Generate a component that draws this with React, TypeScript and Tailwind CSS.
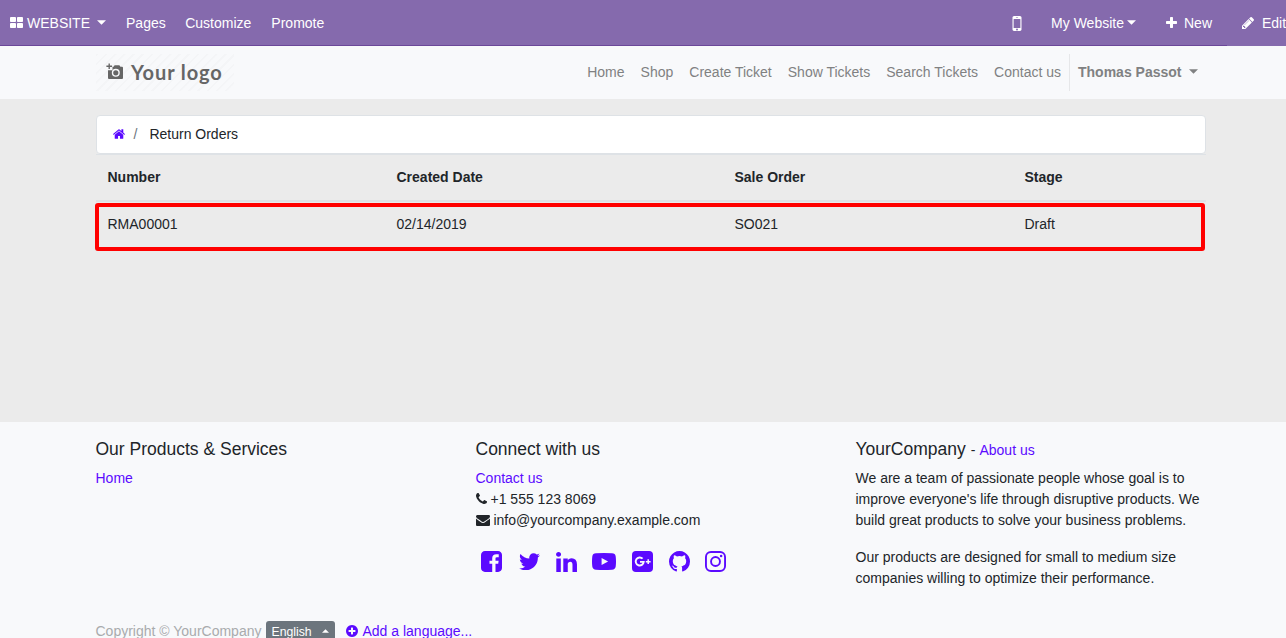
import React from "react";

const P = {
  thLarge:
    "M832 1024v384q0 52-38 90t-90 38h-512q-52 0-90-38t-38-90v-384q0-52 38-90t90-38h512q52 0 90 38t38 90zm0-768v384q0 52-38 90t-90 38h-512q-52 0-90-38t-38-90v-384q0-52 38-90t90-38h512q52 0 90 38t38 90zm896 768v384q0 52-38 90t-90 38h-512q-52 0-90-38t-38-90v-384q0-52 38-90t90-38h512q52 0 90 38t38 90zm0-768v384q0 52-38 90t-90 38h-512q-52 0-90-38t-38-90v-384q0-52 38-90t90-38h512q52 0 90 38t38 90z",
  home: "M1472 992v480q0 26-19 45t-45 19h-384v-384h-256v384h-384q-26 0-45-19t-19-45v-480q0-1 .5-3t.5-3l575-474 575 474q1 2 1 6zm223-69l-62 74q-8 9-21 11h-3q-13 0-21-7l-692-577-692 577q-12 8-24 7-13-2-21-11l-62-74q-8-10-7-23.5t11-21.5l719-599q32-26 76-26t76 26l244 204v-195q0-14 9-23t23-9h192q14 0 23 9t9 23v408l219 182q10 8 11 21.5t-7 23.5z",
  phone:
    "M1600 1240q0 27-10 70.5t-21 68.5q-21 50-122 106-94 51-186 51-27 0-53-3.5t-57.5-12.5-47-14.5-55.5-20.5-49-18q-98-35-175-83-127-79-264-216t-216-264q-48-77-83-175-3-9-18-49t-20.5-55.5-14.5-47-12.5-57.5-3.5-53q0-92 51-186 56-101 106-122 25-11 68.5-21t70.5-10q14 0 21 3 18 6 53 76 11 19 30 54t35 63.5 31 53.5q3 4 17.5 25t21.5 35.5 7 28.5q0 20-28.5 50t-62 55-62 53-28.5 46q0 9 5 22.5t8.5 20.5 14 24 11.5 19q76 137 174 235t235 174q2 1 19 11.5t24 14 20.5 8.5 22.5 5q18 0 46-28.5t53-62 55-62 50-28.5q14 0 28.5 7t35.5 21.5 25 17.5q25 15 53.5 31t63.5 35 54 30q70 35 76 53 3 7 3 21z",
  envelope:
    "M1792 710v794q0 66-47 113t-113 47h-1472q-66 0-113-47t-47-113v-794q44 49 101 87 362 246 497 345 57 42 92.5 65.5t94.5 48 110 24.5h2q51 0 110-24.5t94.5-48 92.5-65.5q170-123 498-345 57-39 100-87zm0-294q0 79-49 151t-122 123q-376 261-468 325-10 7-42.5 31t-54 38.5-52 32.5-57.5 27-50 9h-2q-23 0-50-9t-57.5-27-52-32.5-54-38.5-42.5-31q-91-64-262-182.5t-205-142.5q-62-42-117-115.5t-55-136.5q0-78 41.5-130t118.5-52h1472q65 0 112.5 47t47.5 113z",
  facebook:
    "M1376 128q119 0 203.5 84.5t84.5 203.5v960q0 119-84.5 203.5t-203.5 84.5h-188v-595h199l30-232h-229v-148q0-56 23.5-84t91.5-28l122-1v-207q-63-9-178-9-136 0-217.5 80t-81.5 226v171h-200v232h200v595h-532q-119 0-203.5-84.5t-84.5-203.5v-960q0-119 84.5-203.5t203.5-84.5h960z",
  twitter:
    "M1684 408q-67 98-162 167 1 14 1 42 0 130-38 259.5t-115.5 248.5-184.5 210.5-258 146-323 54.5q-271 0-496-145 35 4 78 4 225 0 401-138-105-2-188-64.5t-114-159.5q33 5 61 5 43 0 85-11-112-23-185.5-111.5t-73.5-205.5v-4q68 38 146 41-66-44-105-115t-39-154q0-88 44-163 121 149 294.5 238.5t371.5 99.5q-8-38-8-74 0-134 94.5-228.5t228.5-94.5q140 0 236 102 109-21 205-78-37 115-142 178 93-10 186-50z",
  linkedin:
    "M477 625v991h-330v-991h330zm21-306q1 73-50.5 122t-135.5 49h-2q-82 0-132-49t-50-122q0-74 51.5-122.5t134.5-48.5 133 48.5 51 122.5zm1166 729v568h-329v-530q0-105-40.5-164.5t-126.5-59.5q-63 0-105.5 34.5t-63.5 85.5q-11 30-11 81v553h-329q2-399 2-647t-1-296l-1-48h329v144h-2q20-32 41-56t56.5-52 87-43.5 114.5-15.5q171 0 275 113.5t104 332.5z",
  github:
    "M896 128q209 0 385.5 103t279.5 279.5 103 385.5q0 251-146.5 451.5t-378.5 277.5q-27 5-40-7t-13-30q0-3 .5-76.5t.5-134.5q0-97-52-142 57-6 102.5-18t94-39 81-66.5 53-105 20.5-150.5q0-119-79-206 37-91-8-204-28-9-81 11t-92 44l-38 24q-93-26-192-26t-192 26q-16-11-42.5-27t-83.5-38.5-85-13.5q-45 113-8 204-79 87-79 206 0 85 20.5 150t52.5 105 80.5 67 94 39 102.5 18q-39 36-49 103-21 10-45 15t-57 5-65.5-21.5-55.5-62.5q-19-32-48.5-52t-49.5-24l-20-3q-21 0-29 4.5t-5 11.5 9 14 13 12l7 5q22 10 43.5 38t31.5 51l10 23q13 38 44 61.5t67 30 69.5 7 55.5-3.5l23-4q0 38 .5 88.5t.5 54.5q0 18-13 30t-40 7q-232-77-378.5-277.5t-146.5-451.5q0-209 103-385.5t279.5-279.5 385.5-103z",
  pencil:
    "M491 1536l91-91-235-235-91 91v107h128v128h107zm523-928q0-22-22-22-10 0-17 7l-542 542q-7 7-7 17 0 22 22 22 10 0 17-7l542-542q7-7 7-17zm-54-192l416 416-832 832h-416v-416zm683 96q0 53-37 90l-166 166-416-416 166-165q36-38 90-38 53 0 91 38l235 234q37 39 37 91z",
  plus: "M1600 736v192q0 40-28 68t-68 28h-416v416q0 40-28 68t-68 28h-192q-40 0-68-28t-28-68v-416h-416q-40 0-68-28t-28-68v-192q0-40 28-68t68-28h416v-416q0-40 28-68t68-28h192q40 0 68 28t28 68v416h416q40 0 68 28t28 68z",
  plusCircle:
    "M1344 960v-128q0-26-19-45t-45-19h-256v-256q0-26-19-45t-45-19h-128q-26 0-45 19t-19 45v256h-256q-26 0-45 19t-19 45v128q0 26 19 45t45 19h256v256q0 26 19 45t45 19h128q26 0 45-19t19-45v-256h256q26 0 45-19t19-45zm320-64q0 209-103 385.5t-279.5 279.5-385.5 103-385.5-103-279.5-279.5-103-385.5 103-385.5 279.5-279.5 385.5-103 385.5 103 279.5 279.5 103 385.5z",
  mobile:
    "M976 1408q0-33-23.5-56.5t-56.5-23.5-56.5 23.5-23.5 56.5 23.5 56.5 56.5 23.5 56.5-23.5 23.5-56.5zm208-160v-704q0-13-9.5-22.5t-22.5-9.5h-512q-13 0-22.5 9.5t-9.5 22.5v704q0 13 9.5 22.5t22.5 9.5h512q13 0 22.5-9.5t9.5-22.5zm-192-848q0-16-16-16h-160q-16 0-16 16t16 16h160q16 0 16-16zm288-16v1024q0 52-38 90t-90 38h-512q-52 0-90-38t-38-90v-1024q0-52 38-90t90-38h512q52 0 90 38t38 90z",
};

function Icon({ d, box, className }: { d: string; box: string; className: string }) {
  return (
    <svg viewBox={box} className={`shrink-0 ${className}`} fill="currentColor" aria-hidden="true">
      <path d={d} />
    </svg>
  );
}

function Caret({ className = "" }: { className?: string }) {
  return (
    <svg viewBox="0 0 9 5" className={`h-[5px] w-[9px] shrink-0 ${className}`} fill="currentColor" aria-hidden="true">
      <path d="M0 .2h9L4.500 4.700z" />
    </svg>
  );
}

function TopBar() {
  return (
    <nav className="flex h-[46px] bg-[#856aad] text-white">
      <div className="flex h-[46px] w-[1227px] shrink-0 items-center border-b border-[#6b4799] pt-0.5">
        <a className="flex items-center pl-[10px]">
          <Icon d={P.thLarge} box="64 128 1664 1408" className="mb-[2px] h-[11px] w-[13px]" />
          <span className="ml-1">WEBSITE</span>
          <Caret className="mb-[2px] ml-[7px]" />
        </a>
        <a className="ml-5">Pages</a>
        <a className="ml-[19.500px]">Customize</a>
        <a className="ml-5">Promote</a>
        <div className="ml-auto flex items-center">
          <Icon d={P.mobile} box="512 256 768 1280" className="mr-[29px] h-[15px] w-[10px]" />
          <a className="flex items-center">
            My Website
            <Caret className="mb-[2px] ml-[3px]" />
          </a>
          <a className="ml-[30px] mr-[15px] flex items-center">
            <Icon d={P.plus} box="192 128 1408 1408" className="mb-[2px] mr-[7px] h-[11px] w-[11px]" />
            New
          </a>
        </div>
      </div>
      <a className="flex h-[45px] shrink-0 items-center pl-[15px] pt-0.5">
        <Icon d={P.pencil} box="128 149 1515 1515" className="mb-px mr-2 h-3 w-3" />
        Edit
      </a>
    </nav>
  );
}

function Logo() {
  return (
    <div className="flex h-[37px] w-[138px] items-center bg-[repeating-linear-gradient(135deg,#f4f5f7_0px,#f4f5f7_1.500px,transparent_2px,transparent_6.500px)] pl-[10px] text-[#666666]">
      <svg viewBox="0 0 18 17" className="-mt-px h-[17px] w-[18px]" fill="none" aria-hidden="true">
        <path
          d="M6.500 3.800h1.100L8.600 2.300h4.800l1 1.500H16q1 0 1 1V15q0 1-1 1H3q-1 0-1-1V7.300h4.500z"
          fill="currentColor"
        />
        <circle cx="9.800" cy="9.800" r="3.300" stroke="#f8f9fb" strokeWidth="1.400" />
        <path d="M3.200 .5v5.500M.4 3.200h5.600" stroke="currentColor" strokeWidth="1.400" />
      </svg>
      <span className="-mt-px ml-[7px] whitespace-nowrap font-[family-name:Lato,sans-serif] text-[20px] font-bold leading-none tracking-[0.9px]">
        Your logo
      </span>
    </div>
  );
}

function Header() {
  const links = ["Home", "Shop", "Create Ticket", "Show Tickets", "Search Tickets", "Contact us"];
  return (
    <header className="flex h-[53px] items-center justify-between bg-[#f8f9fb] pb-px pl-24 pr-[88px] text-[#808182]">
      <Logo />
      <div className="flex items-center">
        <div className="flex gap-4">
          {links.map((l) => (
            <a key={l}>{l}</a>
          ))}
        </div>
        <a className="ml-2 flex h-[37px] items-center border-l border-[#e6e7e9] pl-2 font-bold">
          Thomas Passot
          <Caret className="mb-[2px] ml-[7.500px]" />
        </a>
      </div>
    </header>
  );
}

function Orders() {
  return (
    <main className="h-[323px] bg-[#ebebeb] pl-24 pr-20 pt-4">
      <div className="flex h-[39px] items-center rounded-[4px] border border-[#dee2e6] bg-white pl-4">
        <Icon d={P.home} box="89 253 1614 1283" className="mb-px h-[10px] w-3 text-[#5b0aff]" />
        <span className="ml-[8.500px] text-[#6c757d]">/</span>
        <span className="ml-[12px]">Return Orders</span>
      </div>
      <div className="grid h-[48px] grid-cols-[289px_338px_290px_1fr] border-b-2 border-t border-b-[#dee2e6] border-t-[#dee2e6] pl-[11.500px] pt-3 font-bold">
        <span>Number</span>
        <span>Created Date</span>
        <span>Sale Order</span>
        <span>Stage</span>
      </div>
      <div className="-ml-px mr-px mt-px h-[48px] rounded-[3px] border-4 border-[#ff0000]">
        <div className="grid grid-cols-[289px_338px_290px_1fr] pl-[8.500px] pt-[7px]">
          <span>RMA00001</span>
          <span>02/14/2019</span>
          <span>SO021</span>
          <span>Draft</span>
        </div>
      </div>
    </main>
  );
}

function YoutubeIcon() {
  return (
    <svg viewBox="0 0 24 17" className="h-[17px] w-6" fill="currentColor" aria-hidden="true">
      <path
        fillRule="evenodd"
        d="M4 .3Q12-.2 20 .3Q23.300.4 23.700 3.500Q24.300 8.500 23.700 13.500Q23.300 16.600 20 16.700Q12 17.200 4 16.700Q.7 16.600.3 13.500Q-.3 8.500.3 3.500Q.7.4 4 .3zM9.600 5v7l6.500-3.500z"
      />
    </svg>
  );
}

function GooglePlusIcon() {
  return (
    <svg viewBox="0 0 21 21" className="h-[21px] w-[21px]" fill="none" aria-hidden="true">
      <rect width="21" height="21" rx="3.900" fill="currentColor" />
      <path
        d="M10.600 7.700A4 4 0 1 0 11.700 10.900H8"
        stroke="#f8f9fb"
        strokeWidth="1.900"
      />
      <path d="M16.200 8.300v4.800M13.800 10.700h4.800" stroke="#f8f9fb" strokeWidth="1.500" />
    </svg>
  );
}

function InstagramIcon() {
  return (
    <svg viewBox="0 0 21 21" className="h-[21px] w-[21px]" fill="none" stroke="currentColor" aria-hidden="true">
      <rect x=".95" y=".95" width="19.100" height="19.100" rx="5" strokeWidth="1.900" />
      <circle cx="10.500" cy="10.500" r="4.450" strokeWidth="1.900" />
      <circle cx="16.100" cy="4.900" r="1.250" fill="currentColor" stroke="none" />
    </svg>
  );
}

function Footer() {
  return (
    <footer className="h-[216px] overflow-hidden bg-[#f8f9fb] pl-[95.500px] pt-[17px]">
      <div className="grid h-[182px] grid-cols-[380px_380px_350px]">
        <div>
          <h4 className="mb-2 text-[17.5px] leading-[21px]">Our Products &amp; Services</h4>
          <a className="text-[#5b0aff]">Home</a>
        </div>
        <div>
          <h4 className="mb-2 text-[17.5px] leading-[21px]">Connect with us</h4>
          <a className="block text-[#5b0aff]">Contact us</a>
          <div className="flex items-center">
            <Icon d={P.phone} box="192 128 1408 1408" className="mb-[2px] mr-1 h-[11px] w-[11px]" />
            +1 555 123 8069
          </div>
          <div className="flex items-center">
            <Icon d={P.envelope} box="0 256 1792 1408" className="mr-[3.900px] h-[11px] w-[14px]" />
            info@yourcompany.example.com
          </div>
          <div className="mt-[19px] flex h-[23px] items-center pl-[5.500px] text-[#5b0aff]">
            <Icon d={P.facebook} box="128 128 1536 1536" className="h-[21px] w-[21px]" />
            <Icon d={P.twitter} box="108 256 1576 1280" className="ml-[17px] h-[17.500px] w-[21px]" />
            <Icon d={P.linkedin} box="127 148 1537 1468" className="ml-[16px] h-[20px] w-[21px]" />
            <div className="ml-[15.300px]"><YoutubeIcon /></div>
            <div className="ml-[15.500px]"><GooglePlusIcon /></div>
            <Icon d={P.github} box="128 128 1536 1536" className="ml-[16px] h-[21px] w-[21px]" />
            <div className="ml-[15px]"><InstagramIcon /></div>
          </div>
        </div>
        <div>
          <h4 className="mb-2 text-[17.5px] leading-[21px]">
            YourCompany <span className="text-sm leading-none">- <a className="ml-[0.250px] text-[#5b0aff]">About us</a></span>
          </h4>
          <p className="mb-4">
            We are a team of passionate people whose goal is to improve everyone's life through
            disruptive products. We build great products to solve your business problems.
          </p>
          <p>
            Our products are designed for small to medium size companies willing to optimize their
            performance.
          </p>
        </div>
      </div>
      <div className="flex items-start">
        <span className="text-[#a9abad]">Copyright © YourCompany</span>
        <button className="ml-[4.500px] flex h-[22px] w-[69px] items-center rounded-[3px] bg-[#6c757d] pl-[5.500px] text-[12.250px] text-white">
          English
          <svg viewBox="0 0 7 4" className="mb-[2px] ml-[10px] h-[4px] w-[7px]" fill="currentColor" aria-hidden="true">
            <path d="M0 3.800h7L3.500.3z" />
          </svg>
        </button>
        <a className="ml-[11.500px] flex items-center text-[#5b0aff]">
          <Icon d={P.plusCircle} box="128 128 1536 1536" className="mb-px mr-1 h-3 w-3" />
          Add a language...
        </a>
      </div>
    </footer>
  );
}

export default function App() {
  return (
    <div className="h-[638px] w-[1286px] overflow-hidden font-['Liberation_Sans',Arial,sans-serif] text-sm leading-[21px] text-[#212529]">
      <TopBar />
      <Header />
      <Orders />
      <Footer />
    </div>
  );
}
